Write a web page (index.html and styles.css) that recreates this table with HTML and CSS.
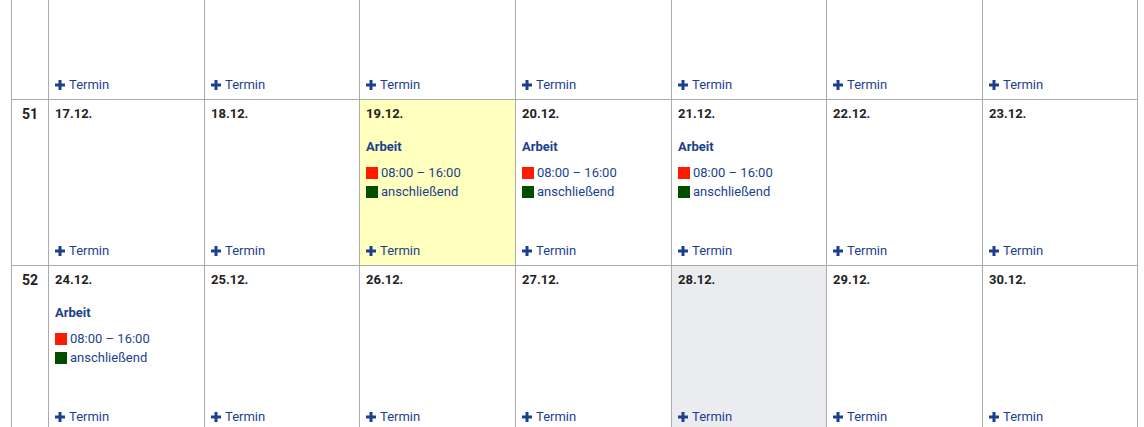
FILE: index.html
```html
<!DOCTYPE html>
<html lang="de">
<head>
<meta charset="utf-8">
<title>Kalender</title>
<link rel="stylesheet" href="styles.css">
</head>
<body>
<div class="viewport">
<table class="cal">
  <colgroup>
    <col class="col-week">
    <col class="w156"><col class="w155"><col class="w156"><col class="w156"><col class="w155"><col class="w156"><col>
  </colgroup>
  <tbody>
    <tr class="partial">
      <td class="week"><div class="wk"></div></td>
      <td><div class="cell"><a class="add" href="#"><svg class="plus" viewBox="0 0 10 10"><path d="M5 0v10M0 5h10"/></svg>Termin</a></div></td>
      <td><div class="cell"><a class="add" href="#"><svg class="plus" viewBox="0 0 10 10"><path d="M5 0v10M0 5h10"/></svg>Termin</a></div></td>
      <td><div class="cell"><a class="add" href="#"><svg class="plus" viewBox="0 0 10 10"><path d="M5 0v10M0 5h10"/></svg>Termin</a></div></td>
      <td><div class="cell"><a class="add" href="#"><svg class="plus" viewBox="0 0 10 10"><path d="M5 0v10M0 5h10"/></svg>Termin</a></div></td>
      <td><div class="cell"><a class="add" href="#"><svg class="plus" viewBox="0 0 10 10"><path d="M5 0v10M0 5h10"/></svg>Termin</a></div></td>
      <td><div class="cell"><a class="add" href="#"><svg class="plus" viewBox="0 0 10 10"><path d="M5 0v10M0 5h10"/></svg>Termin</a></div></td>
      <td><div class="cell"><a class="add" href="#"><svg class="plus" viewBox="0 0 10 10"><path d="M5 0v10M0 5h10"/></svg>Termin</a></div></td>
    </tr>
    <tr>
      <td class="week"><div class="wk">51</div></td>
      <td><div class="cell"><div class="date">17.12.</div><a class="add" href="#"><svg class="plus" viewBox="0 0 10 10"><path d="M5 0v10M0 5h10"/></svg>Termin</a></div></td>
      <td><div class="cell"><div class="date">18.12.</div><a class="add" href="#"><svg class="plus" viewBox="0 0 10 10"><path d="M5 0v10M0 5h10"/></svg>Termin</a></div></td>
      <td class="today"><div class="cell"><div class="date">19.12.</div>
        <div class="event-title">Arbeit</div>
        <div class="events">
          <div class="ev"><span class="sq red"></span>08:00 – 16:00</div>
          <div class="ev"><span class="sq green"></span>anschließend</div>
        </div>
        <a class="add" href="#"><svg class="plus" viewBox="0 0 10 10"><path d="M5 0v10M0 5h10"/></svg>Termin</a></div></td>
      <td><div class="cell"><div class="date">20.12.</div>
        <div class="event-title">Arbeit</div>
        <div class="events">
          <div class="ev"><span class="sq red"></span>08:00 – 16:00</div>
          <div class="ev"><span class="sq green"></span>anschließend</div>
        </div>
        <a class="add" href="#"><svg class="plus" viewBox="0 0 10 10"><path d="M5 0v10M0 5h10"/></svg>Termin</a></div></td>
      <td><div class="cell"><div class="date">21.12.</div>
        <div class="event-title">Arbeit</div>
        <div class="events">
          <div class="ev"><span class="sq red"></span>08:00 – 16:00</div>
          <div class="ev"><span class="sq green"></span>anschließend</div>
        </div>
        <a class="add" href="#"><svg class="plus" viewBox="0 0 10 10"><path d="M5 0v10M0 5h10"/></svg>Termin</a></div></td>
      <td><div class="cell"><div class="date">22.12.</div><a class="add" href="#"><svg class="plus" viewBox="0 0 10 10"><path d="M5 0v10M0 5h10"/></svg>Termin</a></div></td>
      <td><div class="cell"><div class="date">23.12.</div><a class="add" href="#"><svg class="plus" viewBox="0 0 10 10"><path d="M5 0v10M0 5h10"/></svg>Termin</a></div></td>
    </tr>
    <tr>
      <td class="week"><div class="wk">52</div></td>
      <td><div class="cell"><div class="date">24.12.</div>
        <div class="event-title">Arbeit</div>
        <div class="events">
          <div class="ev"><span class="sq red"></span>08:00 – 16:00</div>
          <div class="ev"><span class="sq green"></span>anschließend</div>
        </div>
        <a class="add" href="#"><svg class="plus" viewBox="0 0 10 10"><path d="M5 0v10M0 5h10"/></svg>Termin</a></div></td>
      <td><div class="cell"><div class="date">25.12.</div><a class="add" href="#"><svg class="plus" viewBox="0 0 10 10"><path d="M5 0v10M0 5h10"/></svg>Termin</a></div></td>
      <td><div class="cell"><div class="date">26.12.</div><a class="add" href="#"><svg class="plus" viewBox="0 0 10 10"><path d="M5 0v10M0 5h10"/></svg>Termin</a></div></td>
      <td><div class="cell"><div class="date">27.12.</div><a class="add" href="#"><svg class="plus" viewBox="0 0 10 10"><path d="M5 0v10M0 5h10"/></svg>Termin</a></div></td>
      <td class="past"><div class="cell"><div class="date">28.12.</div><a class="add" href="#"><svg class="plus" viewBox="0 0 10 10"><path d="M5 0v10M0 5h10"/></svg>Termin</a></div></td>
      <td><div class="cell"><div class="date">29.12.</div><a class="add" href="#"><svg class="plus" viewBox="0 0 10 10"><path d="M5 0v10M0 5h10"/></svg>Termin</a></div></td>
      <td><div class="cell"><div class="date">30.12.</div><a class="add" href="#"><svg class="plus" viewBox="0 0 10 10"><path d="M5 0v10M0 5h10"/></svg>Termin</a></div></td>
    </tr>
  </tbody>
</table>
</div>
</body>
</html>
```

FILE: styles.css
```css
html, body {
  margin: 0;
  padding: 0;
  background: #fff;
}

body {
  font-family: Roboto, "Liberation Sans", Arial, sans-serif;
  font-size: 13px;
  color: #222;
  overflow: hidden;
}

.viewport {
  height: 427px;
  overflow: hidden;
  padding-left: 11px;
}

.cal {
  border-collapse: collapse;
  table-layout: fixed;
  width: 1127px;
}

.col-week {
  width: 37px;
}

.w156 {
  width: 156px;
}

.w155 {
  width: 155px;
}

.cal td {
  border: 1px solid #ababab;
  padding: 0;
  vertical-align: top;
  background: #fff;
}

.cal tr.partial td {
  border-top: none;
}

.cal td.today {
  background: #ffffbe;
}

.cal td.past {
  background: #ebecf0;
}

.wk {
  height: 165px;
  box-sizing: border-box;
  padding-top: 6px;
  text-align: center;
  font-weight: 700;
  font-size: 14px;
  line-height: 16px;
  color: #222;
}

.cell {
  height: 165px;
  box-sizing: border-box;
  padding: 6px 6px 6px;
  display: flex;
  flex-direction: column;
}

.partial .wk,
.partial .cell {
  height: 99px;
}

.date {
  font-weight: 700;
  line-height: 16px;
  color: #222;
}

.event-title {
  margin-top: 17px;
  font-weight: 700;
  line-height: 16px;
  color: #1c3f8f;
}

.events {
  margin-top: 8px;
  display: flex;
  flex-direction: column;
}

.ev {
  display: flex;
  align-items: center;
  line-height: 19px;
  color: #1c3f8f;
}

.sq {
  width: 12px;
  height: 12px;
  margin-right: 3px;
  flex: none;
}

.sq.red {
  background: #ff1a00;
}

.sq.green {
  background: #004d00;
}

.add {
  margin-top: auto;
  display: flex;
  align-items: center;
  line-height: 16px;
  color: #1c3f8f;
  text-decoration: none;
}

.plus {
  width: 10px;
  height: 10px;
  margin-right: 4px;
  flex: none;
}

.plus path {
  stroke: #1c3f8f;
  stroke-width: 3;
  fill: none;
}
```
